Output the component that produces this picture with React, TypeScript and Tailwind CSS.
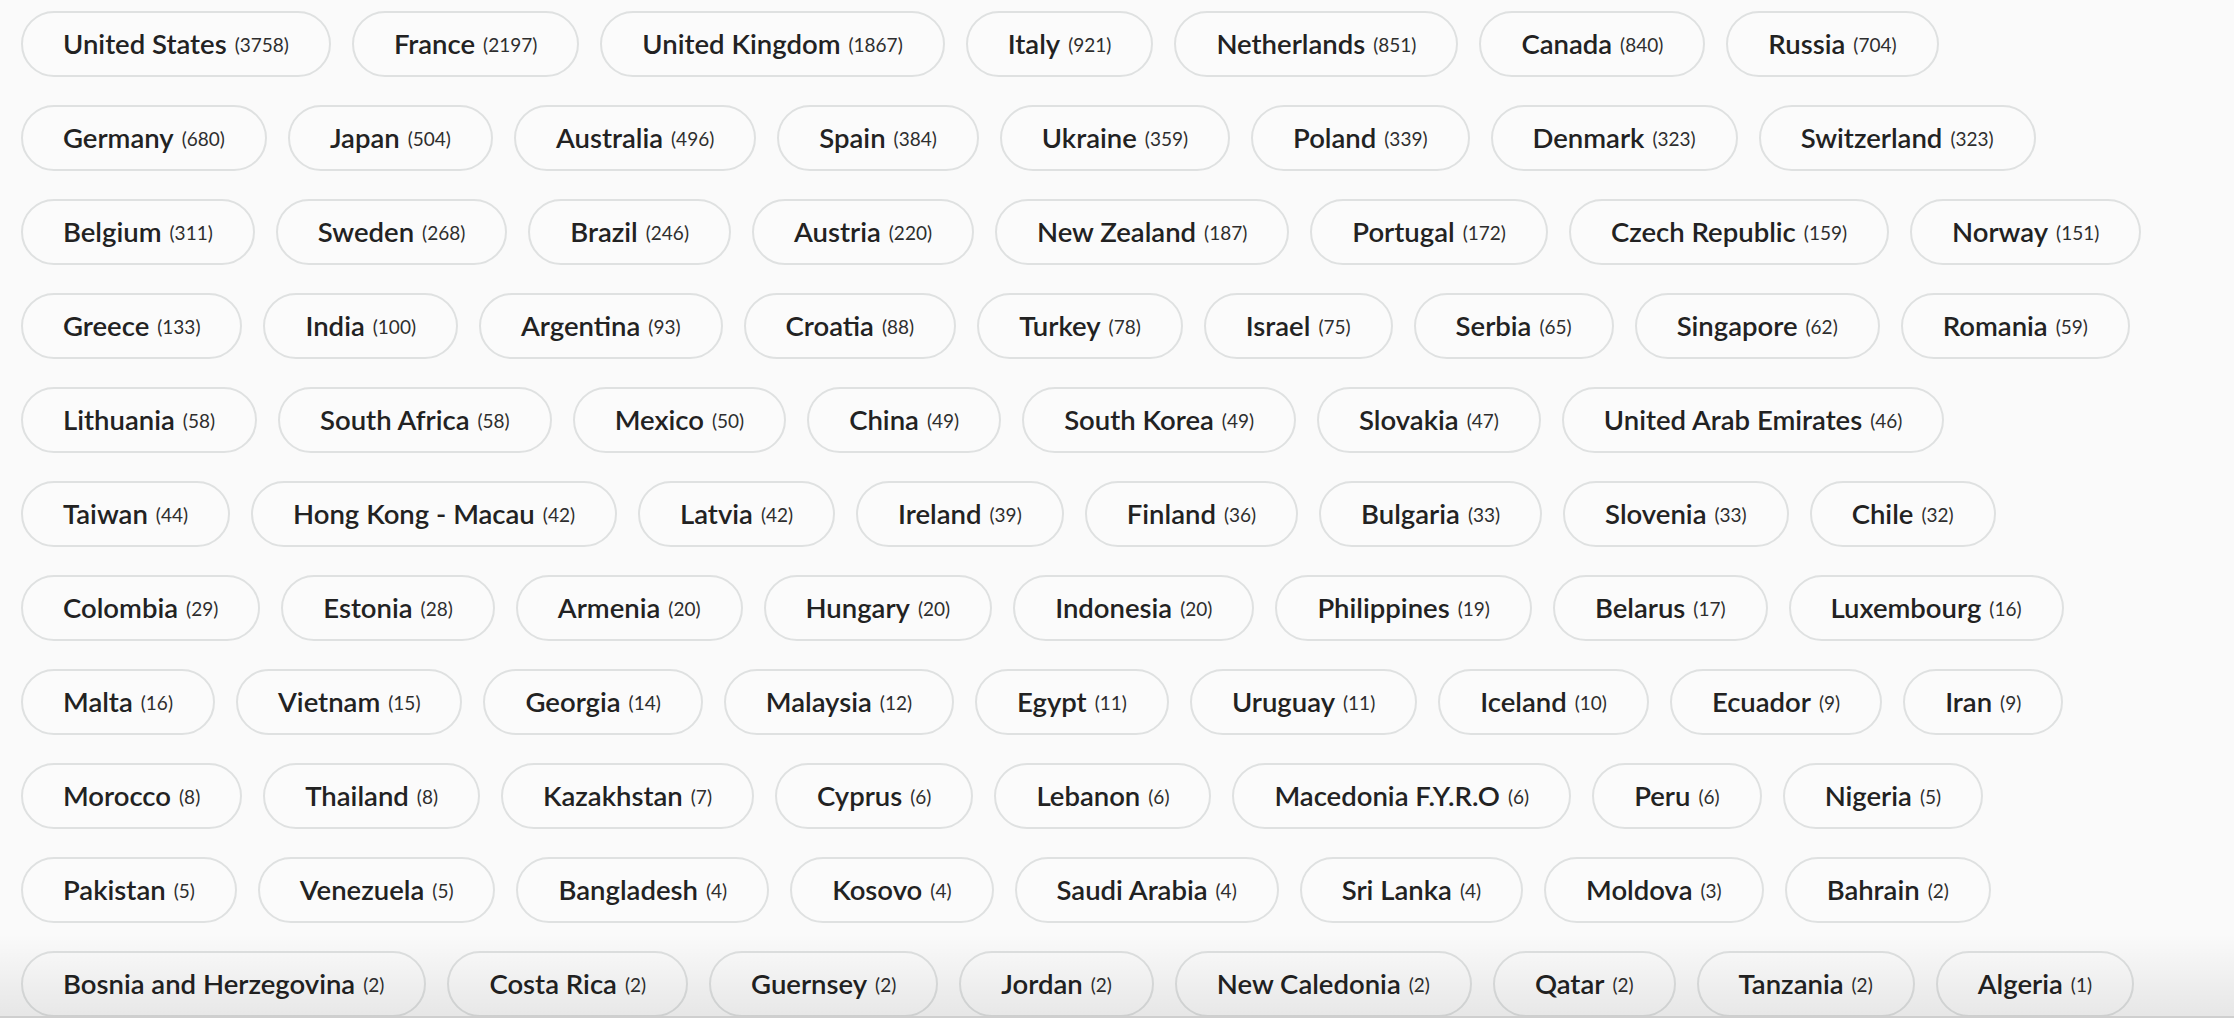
import React from "react";

type Country = [string, number];

const ROWS: Country[][] = [
  [["United States", 3758], ["France", 2197], ["United Kingdom", 1867], ["Italy", 921], ["Netherlands", 851], ["Canada", 840], ["Russia", 704]],
  [["Germany", 680], ["Japan", 504], ["Australia", 496], ["Spain", 384], ["Ukraine", 359], ["Poland", 339], ["Denmark", 323], ["Switzerland", 323]],
  [["Belgium", 311], ["Sweden", 268], ["Brazil", 246], ["Austria", 220], ["New Zealand", 187], ["Portugal", 172], ["Czech Republic", 159], ["Norway", 151]],
  [["Greece", 133], ["India", 100], ["Argentina", 93], ["Croatia", 88], ["Turkey", 78], ["Israel", 75], ["Serbia", 65], ["Singapore", 62], ["Romania", 59]],
  [["Lithuania", 58], ["South Africa", 58], ["Mexico", 50], ["China", 49], ["South Korea", 49], ["Slovakia", 47], ["United Arab Emirates", 46]],
  [["Taiwan", 44], ["Hong Kong - Macau", 42], ["Latvia", 42], ["Ireland", 39], ["Finland", 36], ["Bulgaria", 33], ["Slovenia", 33], ["Chile", 32]],
  [["Colombia", 29], ["Estonia", 28], ["Armenia", 20], ["Hungary", 20], ["Indonesia", 20], ["Philippines", 19], ["Belarus", 17], ["Luxembourg", 16]],
  [["Malta", 16], ["Vietnam", 15], ["Georgia", 14], ["Malaysia", 12], ["Egypt", 11], ["Uruguay", 11], ["Iceland", 10], ["Ecuador", 9], ["Iran", 9]],
  [["Morocco", 8], ["Thailand", 8], ["Kazakhstan", 7], ["Cyprus", 6], ["Lebanon", 6], ["Macedonia F.Y.R.O", 6], ["Peru", 6], ["Nigeria", 5]],
  [["Pakistan", 5], ["Venezuela", 5], ["Bangladesh", 4], ["Kosovo", 4], ["Saudi Arabia", 4], ["Sri Lanka", 4], ["Moldova", 3], ["Bahrain", 2]],
  [["Bosnia and Herzegovina", 2], ["Costa Rica", 2], ["Guernsey", 2], ["Jordan", 2], ["New Caledonia", 2], ["Qatar", 2], ["Tanzania", 2], ["Algeria", 1]],
];

const CountryPill = ({ name, count }: { name: string; count: number }) => (
  <button className="flex h-[66px] shrink-0 items-center whitespace-nowrap rounded-full border-2 border-[#dfe1e1] bg-[#fbfbfb] px-[40px] text-[#222222]">
    <span className="text-[27.5px] font-semibold leading-none">{name}</span>
    <span className="ml-[8px] text-[19px] font-normal leading-none text-[#2e2e2e]">({count})</span>
  </button>
);

export default function App() {
  return (
    <div className="relative h-[1018px] w-full overflow-hidden bg-[#fafafa] font-['Lato',sans-serif]">
      <div className="flex flex-col gap-[28px] pl-[21px] pt-[11px]">
        {ROWS.map((row, i) => (
          <div key={i} className="flex gap-[21px]">
            {row.map(([name, count]) => (
              <CountryPill key={name} name={name} count={count} />
            ))}
          </div>
        ))}
      </div>
      {/* bottom fade */}
      <div className="pointer-events-none absolute inset-x-0 bottom-0 h-[84px] border-b-2 border-[#cfcfcf] bg-gradient-to-b from-transparent to-[#00000014]" />
    </div>
  );
}
